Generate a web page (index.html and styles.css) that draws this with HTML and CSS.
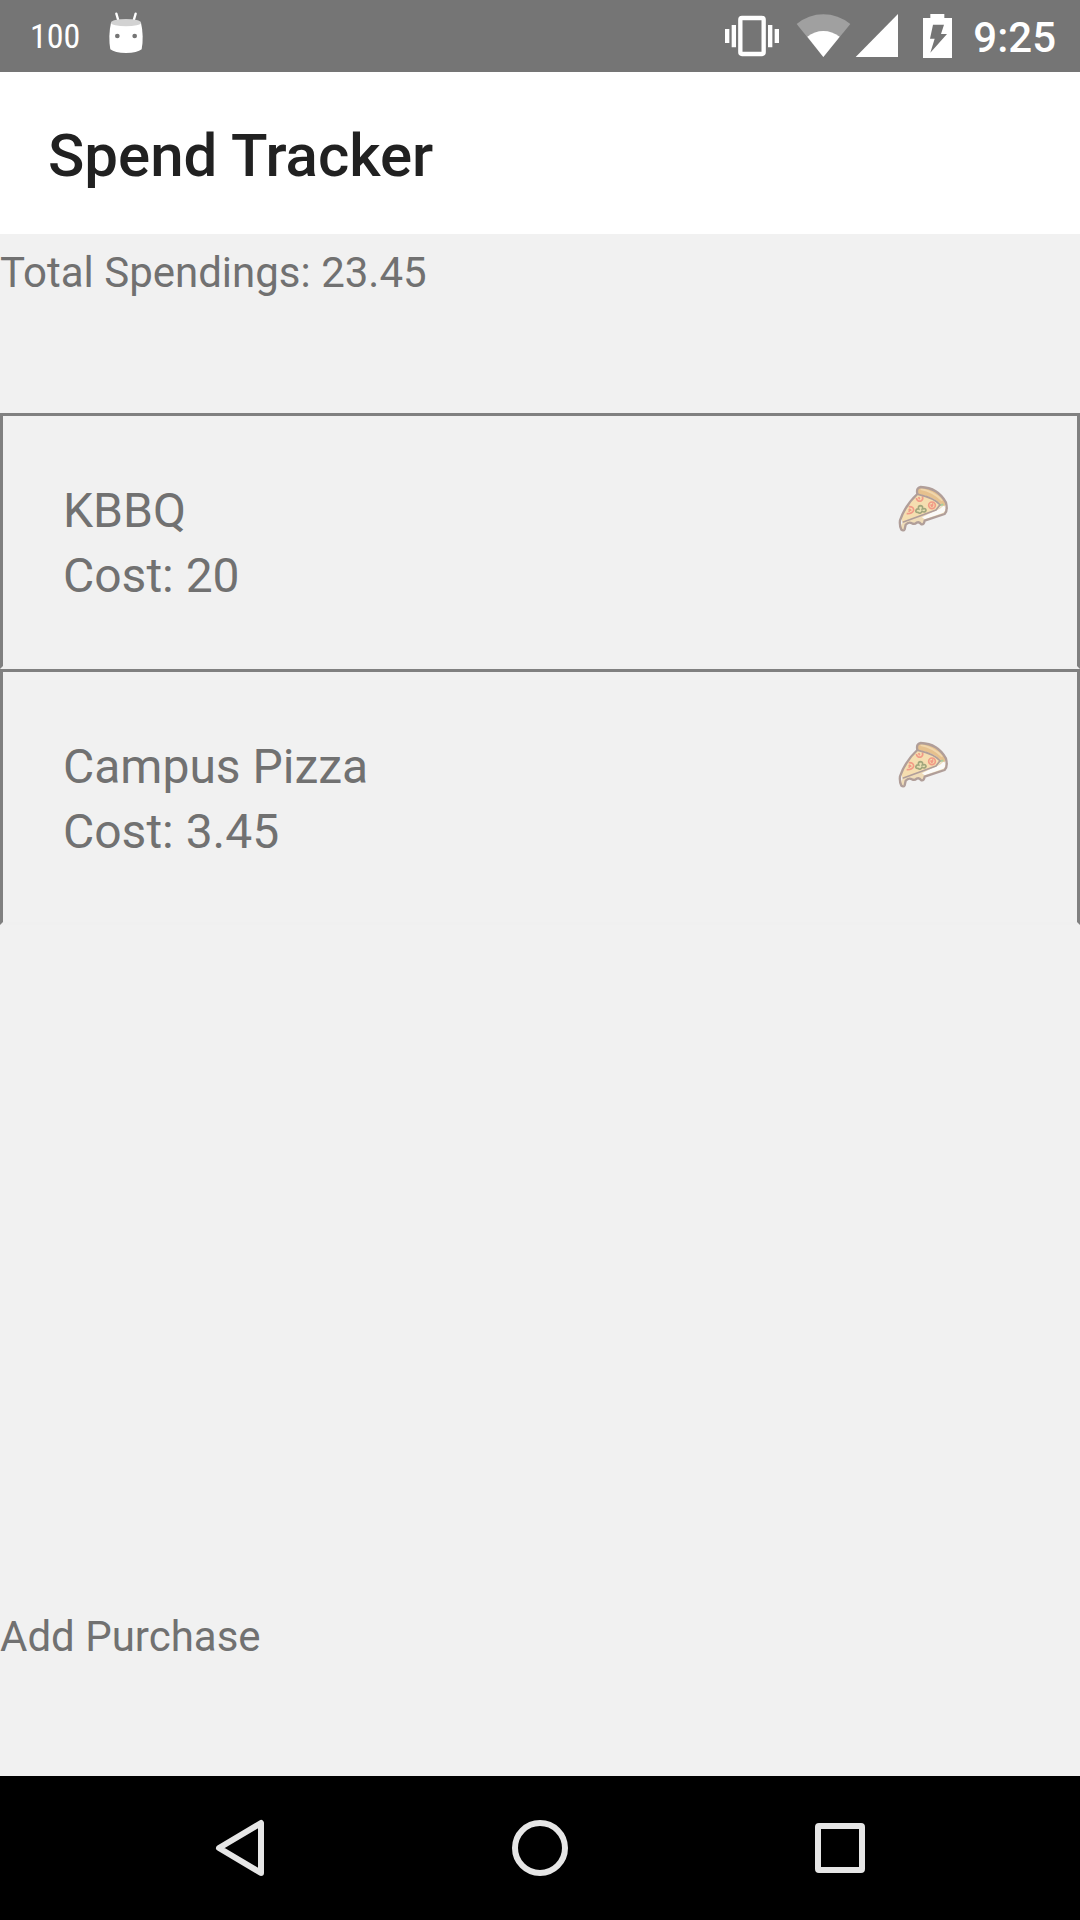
FILE: index.html
```html
<!DOCTYPE html>
<html lang="en">
<head>
<meta charset="utf-8">
<meta name="viewport" content="width=device-width, initial-scale=1">
<title>Spend Tracker</title>
<link rel="stylesheet" href="styles.css">
</head>
<body>
<svg class="symbols" aria-hidden="true">
  <symbol id="pizza" viewBox="54 45 150 144">
    <path d="M110 74L122 72Q160 84 187 104L168 120L68 158Q64 150 66 138Q84 100 110 74Z" fill="#f5deb0"/>
    <path d="M68 158L165 122Q180 112 190 104L197 112Q200 124 194 130L134 152Q132 164 124 162Q118 154 110 158Q104 164 96 160Q86 154 77 164L74 176Q70 184 64 178Q60 168 68 158Z" fill="#efdcb8"/>
    <path d="M150 130L180 116L192 106L196 114Q197 124 190 128L134 148L126 142Z" fill="#fbfaf8"/>
    <path d="M112 72Q108 54 122 52Q174 56 197 98Q199 110 188 107Q160 78 112 72Z" fill="#e6c18e"/>
    <path d="M122 57Q160 64 187 92" fill="none" stroke="#f0d6ac" stroke-width="6"/>
    <g fill="none" stroke="#f29a86" stroke-width="5">
      <path d="M109 84Q112 96 123 93Q131 88 127 79M116 81L119 88"/>
      <circle cx="156" cy="106" r="10"/><path d="M151 104L160 108M159 100L154 111"/>
      <path d="M86 110Q101 109 101 121Q97 132 80 131M86 117L94 122M92 117L86 125"/>
    </g>
    <path d="M116 117Q113 107 122 107Q130 108 127 117Q138 113 138 121Q135 129 126 124Q121 133 114 127Q106 128 108 121Q110 115 116 117Z" fill="#e8dfb2" stroke="#a0a67c" stroke-width="5"/>
    <path d="M179 106L190 103" stroke="#a7ce9e" stroke-width="5"/>
    <g fill="none" stroke="#b09e99" stroke-width="7" stroke-linejoin="round" stroke-linecap="round">
      <path d="M112 72Q108 53 122 51Q174 53 198 98Q204 122 194 132L134 152Q132 165 124 163Q118 154 110 158Q104 164 96 160Q86 154 77 164L74 178Q70 184 64 179Q58 168 60 151Q76 105 112 72Z"/>
      <path d="M114 73Q163 84 180 104L168 120Q120 138 70 156" stroke-width="5"/>
    </g>
  </symbol>
</svg>

<header class="status-bar">
  <div class="status-group">
    <span class="status-level">100</span>
    <svg class="icon-debug" viewBox="312 0 132 216" aria-hidden="true">
      <path d="M349 41L356 65M407 41L400 65" stroke="#fff" stroke-width="7" stroke-linecap="round"/>
      <path d="M333 68Q324 108 331 148Q344 159 378 159Q412 159 425 148Q432 108 423 68Z" fill="#fff"/>
      <ellipse cx="378" cy="68" rx="45" ry="11" fill="#d2d2d2"/>
      <circle cx="352" cy="108" r="7" fill="#757575"/><circle cx="404" cy="108" r="7" fill="#757575"/>
    </svg>
  </div>
  <div class="status-group">
    <svg class="icon-wide" viewBox="48 0 216 216" aria-hidden="true">
      <rect x="121" y="54" width="70" height="108" rx="5" fill="none" stroke="#fff" stroke-width="13"/>
      <path d="M75 87H88V129H75ZM95 75H108V142H95ZM204 75H217V142H204ZM224 87H237V129H224Z" fill="#fff"/>
    </svg>
    <svg class="icon-wifi" viewBox="264 0 192 216" aria-hidden="true">
      <path d="M290 72Q326 43 370 43T451 72L370 171Z" fill="#a0a0a0"/>
      <path d="M322 110Q344 93 370 93T419 110L370 171Z" fill="#fff"/>
    </svg>
    <svg class="icon-slot" viewBox="456 0 168 216" aria-hidden="true">
      <path d="M594 42V171H467Z" fill="#fff"/>
    </svg>
    <svg class="icon-slot" viewBox="624 0 168 216" aria-hidden="true">
      <path d="M691 42H733V54H756V174H669V54H691Z" fill="#fff"/>
      <path d="M699 74H732L723 102H741L691 158L704 116H690Z" fill="#757575"/>
    </svg>
    <time class="clock">9:25</time>
  </div>
</header>

<div class="app-bar"><h1>Spend Tracker</h1></div>

<main>
  <p class="total">Total Spendings: 23.45</p>
  <ul class="purchases">
    <li class="purchase">
      <div><p>KBBQ</p><p>Cost: 20</p></div>
      <svg class="category" role="img" aria-label="Food"><use href="#pizza"/></svg>
    </li>
    <li class="purchase">
      <div><p>Campus Pizza</p><p>Cost: 3.45</p></div>
      <svg class="category" role="img" aria-label="Food"><use href="#pizza"/></svg>
    </li>
  </ul>
  <button class="add" type="button">Add Purchase</button>
</main>

<nav class="nav-bar">
  <button type="button" aria-label="Back"><svg viewBox="0 0 72 72"><path d="M57 11V61L15 36Z"/></svg></button>
  <button type="button" aria-label="Home"><svg viewBox="0 0 72 72"><circle cx="36" cy="36" r="25"/></svg></button>
  <button type="button" aria-label="Recent apps"><svg viewBox="0 0 72 72"><rect x="14" y="14" width="44" height="44" rx="1"/></svg></button>
</nav>
</body>
</html>
```
FILE: styles.css
```css
* { box-sizing: border-box; }

body {
  margin: 0;
  min-height: 100vh;
  display: flex;
  flex-direction: column;
  background: #f1f1f1;
  color: #717171;
  font-family: Roboto, "Noto Sans", sans-serif;
  font-size: 42px;
  line-height: 49px;
}

h1, p, ul { margin: 0; padding: 0; }
svg { display: block; }
.symbols { display: none; }

button {
  padding: 0;
  border: 0;
  background: none;
  color: inherit;
  font: inherit;
  text-align: left;
}

.status-bar {
  display: flex;
  justify-content: space-between;
  height: 72px;
  padding: 0 24px 0 30px;
  background: #757575;
  color: #fff;
}

.status-group { display: flex; align-items: center; }

.status-level {
  width: 74px;
  font-family: "Roboto Condensed", "Liberation Sans Narrow", Roboto, sans-serif;
  font-size: 34px;
}

.icon-debug { width: 44px; height: 72px; }
.icon-wide { width: 72px; height: 72px; }
.icon-wifi { width: 64px; height: 72px; }
.icon-slot { width: 56px; height: 72px; }

.clock { margin-left: 9px; padding-top: 2px; font-weight: 500; }

.app-bar {
  display: flex;
  align-items: center;
  height: 162px;
  padding: 5px 48px 0;
  background: #fff;
  color: #212121;
}

h1 { font-size: 60px; line-height: 70px; font-weight: 500; }

main {
  flex: 1;
  display: flex;
  flex-direction: column;
  padding: 14px 0 115px;
}

.total { margin-bottom: 116px; }

.purchases { list-style: none; }

.purchase {
  display: flex;
  justify-content: space-between;
  align-items: flex-start;
  padding: 62px 129px 58px 60px;
  border: 3px solid #808080;
  border-bottom-color: #f0f0f0;
  font-size: 48px;
  line-height: 65px;
}

.category { width: 50px; height: 48px; margin-top: 7px; }

.add { margin-top: auto; }

.nav-bar {
  display: grid;
  grid-template-columns: repeat(3, 1fr);
  height: 144px;
  padding: 0 90px;
  background: #000;
}

.nav-bar button { display: grid; place-items: center; }

.nav-bar svg {
  width: 72px;
  height: 72px;
  fill: none;
  stroke: #e6e6e6;
  stroke-width: 6px;
  stroke-linejoin: round;
}
```
